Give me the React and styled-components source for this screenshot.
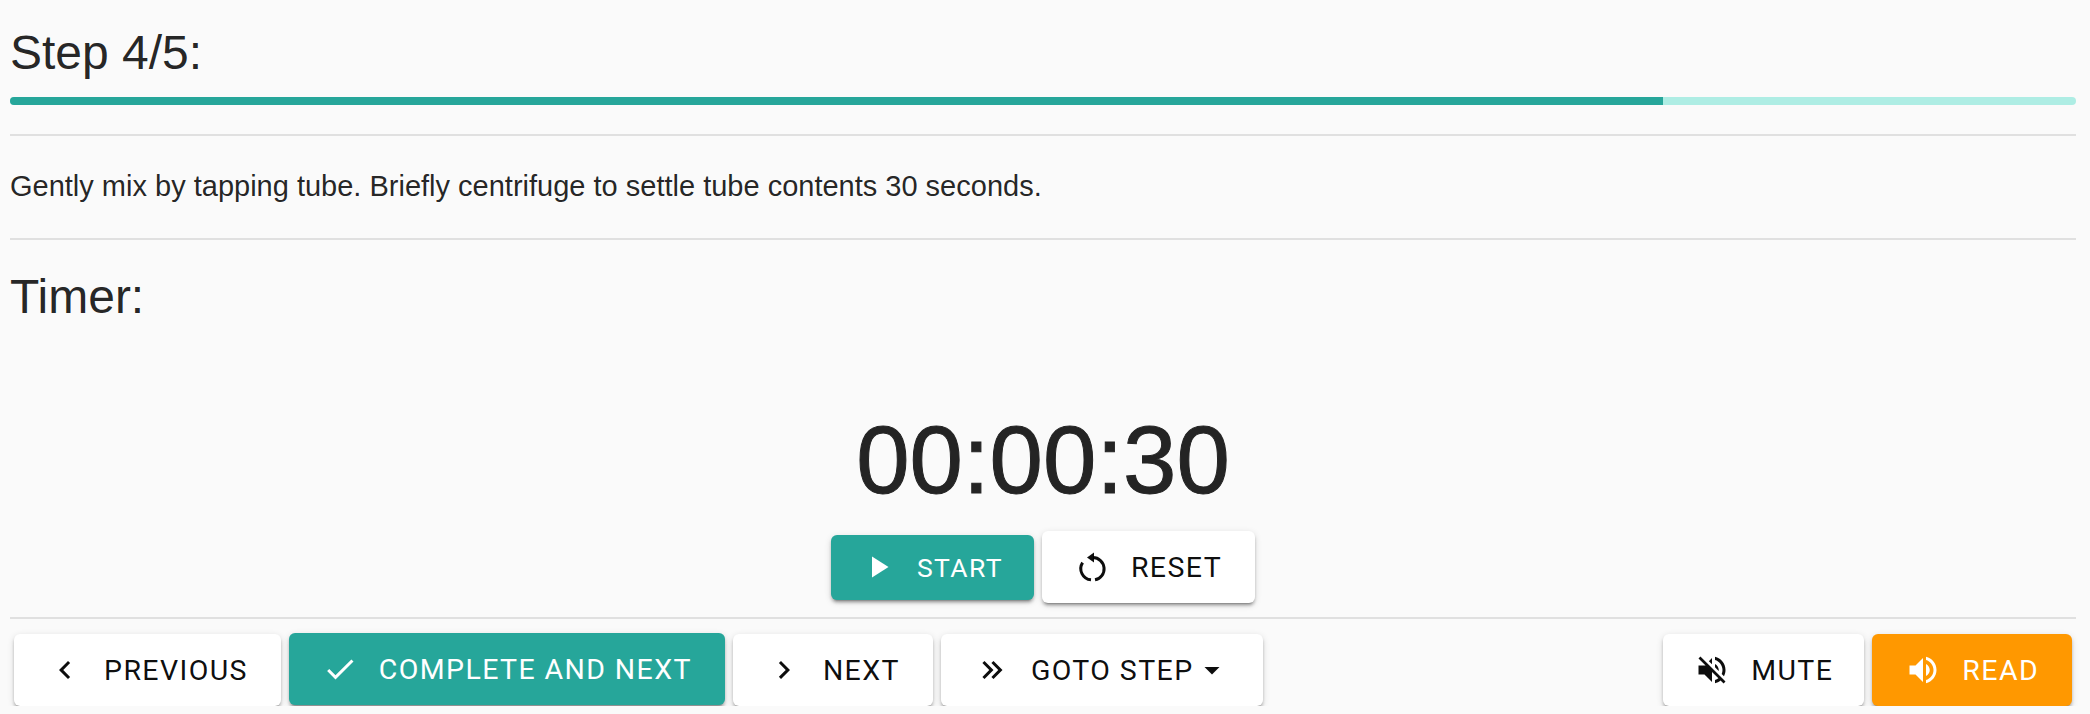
import React from 'react'
import styled, { createGlobalStyle } from 'styled-components'

const GlobalStyle = createGlobalStyle`
    html, body {
        margin: 0;
        padding: 0;
        background: #fafafa;
        overflow: hidden;
    }
    * {
        box-sizing: border-box;
    }
`

const paths = {
    previous: 'M15.41 7.41L14 6l-6 6 6 6 1.41-1.41L10.83 12z',
    next: 'M10 6L8.59 7.41 13.17 12l-4.58 4.58L10 18l6-6z',
    check: 'M9 16.17L4.83 12l-1.42 1.41L9 19 21 7l-1.41-1.41z',
    play: 'M8 5v14l11-7z',
    goto: 'M5.59 7.41L7 6l6 6-6 6-1.41-1.41L10.17 12 5.59 7.41m6 0L13 6l6 6-6 6-1.41-1.41L16.17 12l-4.58-4.59z',
    caret: 'M7 10l5 5 5-5z',
    mute: 'M16.5 12c0-1.77-1.02-3.29-2.5-4.03v2.21l2.45 2.45c.03-.2.05-.41.05-.63zm2.5 0c0 .94-.2 1.82-.54 2.64l1.51 1.51C20.63 14.91 21 13.5 21 12c0-4.28-2.99-7.86-7-8.77v2.06c2.89.86 5 3.54 5 6.71zM4.27 3L3 4.27 7.73 9H3v6h4l5 5v-6.73l4.25 4.25c-.67.52-1.42.93-2.25 1.18v2.06c1.38-.31 2.63-.95 3.69-1.81L19.73 21 21 19.73l-9-9L4.27 3zM12 4L9.91 6.09 12 8.18V4z',
    read: 'M3 9v6h4l5 5V4L7 9H3zm13.5 3c0-1.77-1.02-3.29-2.5-4.03v8.05c1.48-.73 2.5-2.25 2.5-4.02zM14 3.23v2.06c2.89.86 5 3.54 5 6.71s-2.11 5.85-5 6.71v2.06c4.01-.91 7-4.49 7-8.77s-2.99-7.86-7-8.77z',
}

const Icon = ({ name }) => (
    <IconSvg viewBox="0 0 24 24" fill="currentColor">
        <path d={paths[name]} />
    </IconSvg>
)

const ResetIcon = () => (
    <IconSvg viewBox="0 0 36 36" fill="none" stroke="currentColor" strokeWidth="3">
        <path d="M18 8.6a11.2 11.2 0 0 1 2 22.2" />
        <path d="M16 30.8a11.2 11.2 0 0 1 -8.4 -17.2" />
        <path d="M19 3.5v10l-7-5z" fill="currentColor" stroke="none" />
    </IconSvg>
)

const colors = {
    default: { bg: '#fff', fg: 'rgba(0, 0, 0, 0.95)' },
    primary: { bg: '#26a69a', fg: '#fff' },
    warning: { bg: '#ff9800', fg: '#fff' },
}

const App = () => (
    <>
        <GlobalStyle />
        <Page>
            <Heading>Step 4/5:</Heading>
            <Progress>
                <ProgressFill style={{ width: `${(4 / 5) * 100}%` }} />
            </Progress>
            <Divider />
            <Description>Gently mix by tapping tube. Briefly centrifuge to settle tube contents 30 seconds.</Description>
            <Divider />
            <TimerHeading>Timer:</TimerHeading>
            <Clock>00:00:30</Clock>
            <TimerActions>
                <StartButton $variant="primary">
                    <Icon name="play" />
                    START
                </StartButton>
                <ResetButton>
                    <ResetIcon />
                    RESET
                </ResetButton>
            </TimerActions>
            <Divider />
            <Toolbar>
                <ButtonGroup>
                    <Button>
                        <Icon name="previous" />
                        PREVIOUS
                    </Button>
                    <Button $variant="primary" $raised>
                        <Icon name="check" />
                        COMPLETE AND NEXT
                    </Button>
                    <Button>
                        <Icon name="next" />
                        NEXT
                    </Button>
                    <Button>
                        <Icon name="goto" />
                        GOTO STEP
                        <Caret><Icon name="caret" /></Caret>
                    </Button>
                </ButtonGroup>
                <ButtonGroup>
                    <MuteButton>
                        <Icon name="mute" />
                        MUTE
                    </MuteButton>
                    <Button $variant="warning">
                        <Icon name="read" />
                        READ
                    </Button>
                </ButtonGroup>
            </Toolbar>
        </Page>
    </>
)

const Page = styled.main`
    width: 2066px;
    margin-left: 10px;
    padding-top: 25px;
    font-family: "Liberation Sans", Arial, sans-serif;
    color: rgba(0, 0, 0, 0.87);
`

const Heading = styled.h1`
    margin: 0 0 16px;
    font-size: 48px;
    line-height: 56px;
    font-weight: 400;
`

const Progress = styled.div`
    height: 8px;
    margin-bottom: 29px;
    border-radius: 4px;
    overflow: hidden;
    background: #aeede4;
`

const ProgressFill = styled.div`
    height: 100%;
    background: #26a69a;
`

const Divider = styled.hr`
    height: 2px;
    margin: 0;
    border: 0;
    background: #e0e0e0;
`

const Description = styled.p`
    margin: 0;
    padding: 30px 0 32px;
    font-size: 29px;
    line-height: 40px;
`

const TimerHeading = styled(Heading)`
    margin: 29px 0 0;
`

const Clock = styled.div`
    margin-top: 80px;
    font-size: 96px;
    line-height: 110px;
    text-align: center;
    color: #242424;
    -webkit-text-stroke: 1px #242424;
`

const TimerActions = styled.div`
    display: flex;
    justify-content: center;
    align-items: center;
    gap: 8px;
    margin: 16px 0 14px;
`

const Toolbar = styled.div`
    display: flex;
    justify-content: space-between;
    margin-top: 15px;
    padding: 0 4px;
`

const ButtonGroup = styled.div`
    display: flex;
    gap: 8px;
`

const Button = styled.button`
    display: inline-flex;
    align-items: center;
    gap: 21px;
    height: 72px;
    padding: 0 33px;
    border: 0;
    border-radius: 6px;
    background: ${p => colors[p.$variant || 'default'].bg};
    color: ${p => colors[p.$variant || 'default'].fg};
    font-family: Roboto, Arial, sans-serif;
    font-size: 28.5px;
    font-weight: 400;
    letter-spacing: 1.4px;
    white-space: nowrap;
    box-shadow: 0 4px 2px -3px rgba(0, 0, 0, 0.28), 0 3px 3px 0 rgba(0, 0, 0, 0.2), 0 2px 7px 0 rgba(0, 0, 0, 0.14);
    transform: ${p => (p.$raised ? 'translateY(-1px)' : 'none')};
`

const StartButton = styled(Button)`
    height: 65px;
    padding: 0 31px 0 29px;
    font-size: 26.5px;
`

const ResetButton = styled(Button)`
    gap: 20px;
`

const MuteButton = styled(Button)`
    padding: 0 31px;
`

const IconSvg = styled.svg`
    width: 36px;
    height: 36px;
    flex: none;
`

const Caret = styled.span`
    display: inline-flex;
    margin-left: -21px;
`

export default App
